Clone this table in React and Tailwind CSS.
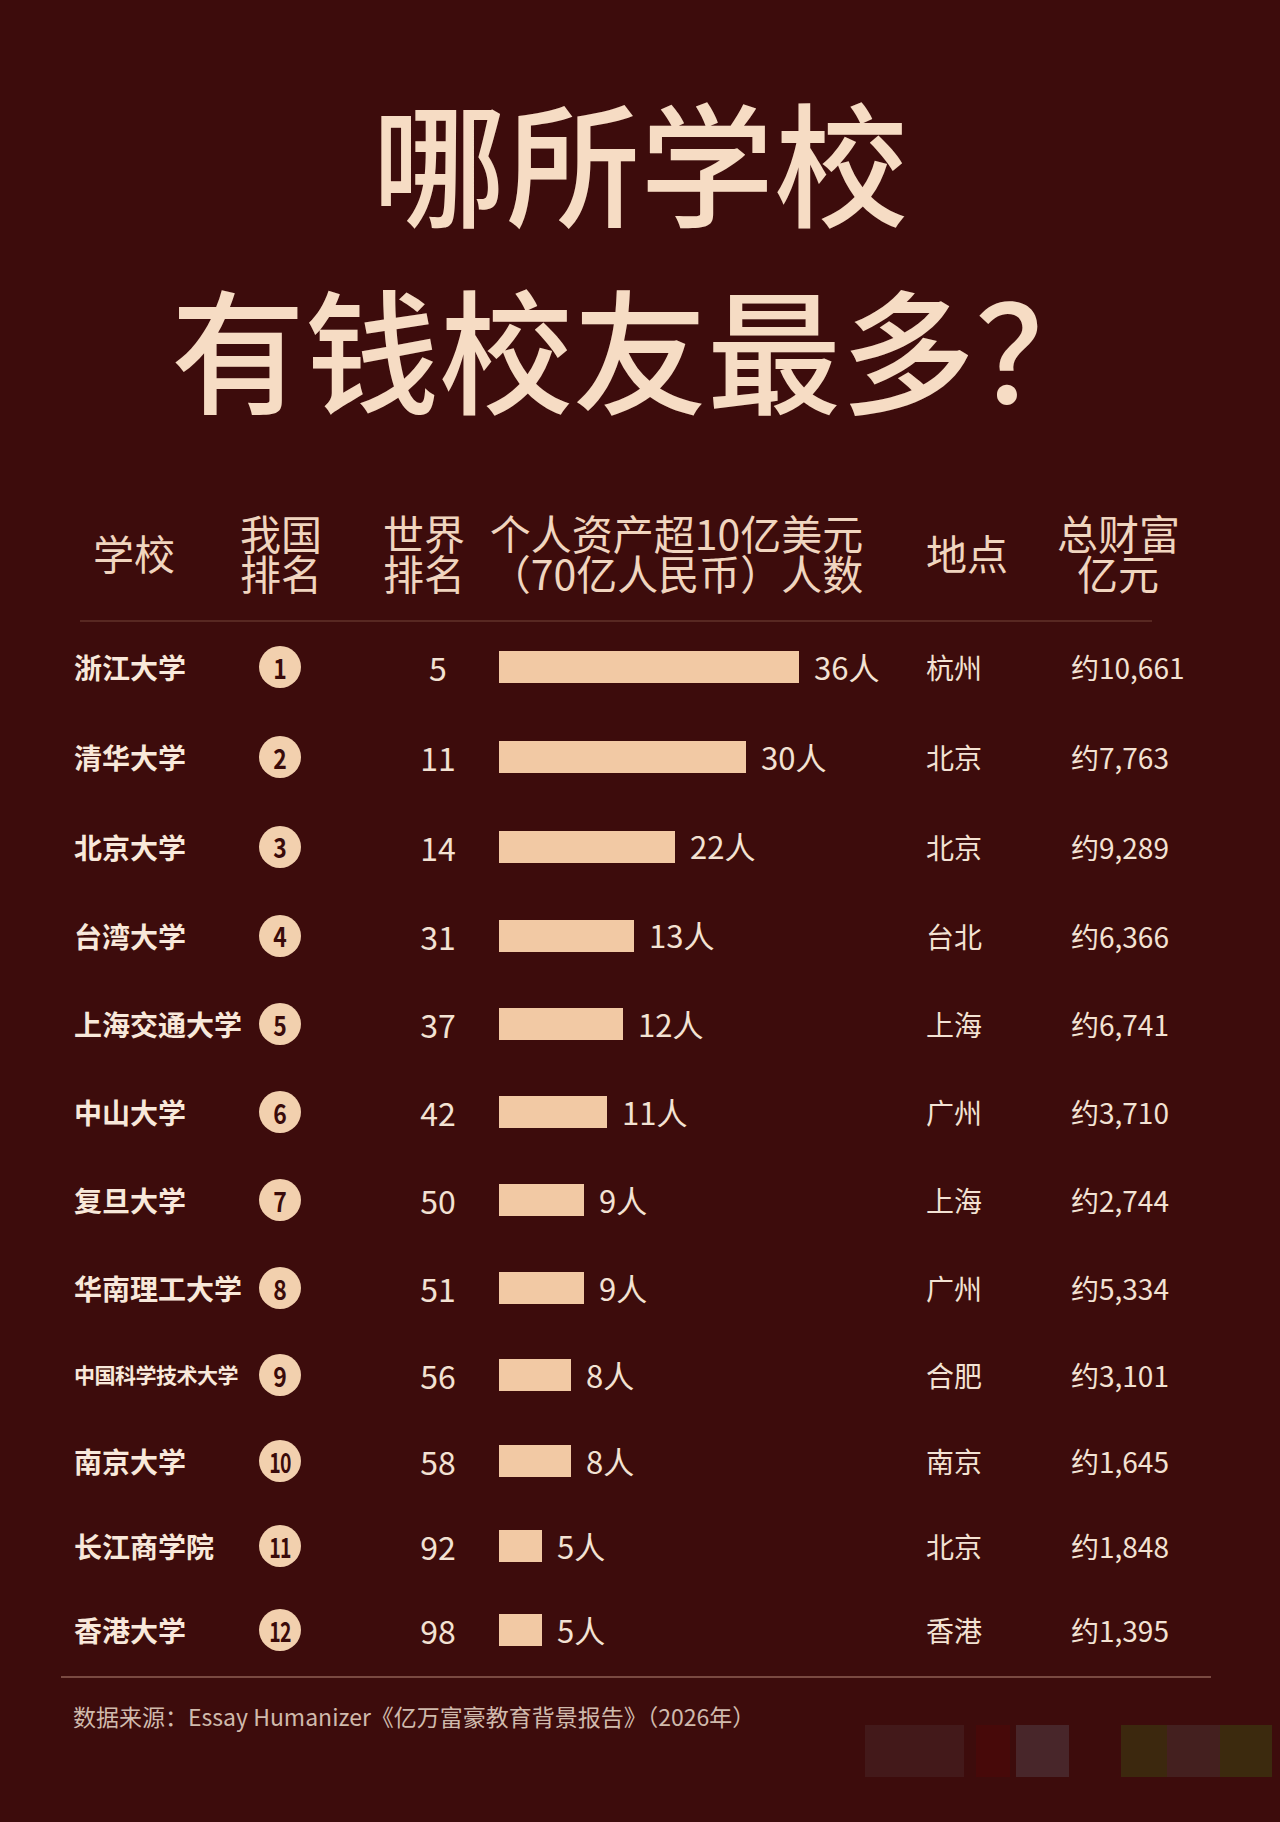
import React from "react";

const rows = [
  { name: "浙江大学", rank: 1, world: 5, count: 36, bar: "w-[300px]", city: "杭州", wealth: "约10,661", h: "h-[90px]" },
  { name: "清华大学", rank: 2, world: 11, count: 30, bar: "w-[247px]", city: "北京", wealth: "约7,763", h: "h-[90px]" },
  { name: "北京大学", rank: 3, world: 14, count: 22, bar: "w-[176px]", city: "北京", wealth: "约9,289", h: "h-[89px]" },
  { name: "台湾大学", rank: 4, world: 31, count: 13, bar: "w-[135px]", city: "台北", wealth: "约6,366", h: "h-[89px]" },
  { name: "上海交通大学", rank: 5, world: 37, count: 12, bar: "w-[124px]", city: "上海", wealth: "约6,741", h: "h-[88px]" },
  { name: "中山大学", rank: 6, world: 42, count: 11, bar: "w-[108px]", city: "广州", wealth: "约3,710", h: "h-[88px]" },
  { name: "复旦大学", rank: 7, world: 50, count: 9, bar: "w-[85px]", city: "上海", wealth: "约2,744", h: "h-[88px]" },
  { name: "华南理工大学", rank: 8, world: 51, count: 9, bar: "w-[85px]", city: "广州", wealth: "约5,334", h: "h-[88px]" },
  { name: "中国科学技术大学", rank: 9, world: 56, count: 8, bar: "w-[72px]", city: "合肥", wealth: "约3,101", h: "h-[86px]", small: true },
  { name: "南京大学", rank: 10, world: 58, count: 8, bar: "w-[72px]", city: "南京", wealth: "约1,645", h: "h-[86px]" },
  { name: "长江商学院", rank: 11, world: 92, count: 5, bar: "w-[43px]", city: "北京", wealth: "约1,848", h: "h-[84px]" },
  { name: "香港大学", rank: 12, world: 98, count: 5, bar: "w-[43px]", city: "香港", wealth: "约1,395", h: "h-[84px]" },
];

const Row = ({ r }) => (
  <div className={`flex items-center pl-[74px] ${r.h}`}>
    <div
      className={`w-[176px] font-bold text-[#f8e8da] whitespace-nowrap ${
        r.small ? "text-[21px] tracking-[-0.5px]" : "text-[28px]"
      }`}
    >
      {r.name}
    </div>
    <div className="w-[60px] flex justify-center">
      <div className="w-[42px] h-[42px] rounded-full bg-[#f2d0ae] flex items-center justify-center text-[27px] font-bold leading-none text-[#3a0b0a]">
        <span className={r.rank > 9 ? "inline-block scale-x-[0.72] tracking-[-1px]" : "inline-block scale-x-[0.85]"}>
          {r.rank}
        </span>
      </div>
    </div>
    <div className="ml-[88px] w-[80px] text-center text-[32px] text-[#f3e2d3]">{r.world}</div>
    <div className="ml-[21px] w-[427px] flex items-center">
      <div className={`h-[32px] bg-[#f2c9a4] ${r.bar}`} />
      <span className="ml-[15px] text-[31px] text-[#f3e2d3]">{r.count}人</span>
    </div>
    <div className="w-[145px] text-[28px] text-[#f3e2d3]">{r.city}</div>
    <div className="text-[28px] text-[#f3e2d3] whitespace-nowrap">{r.wealth}</div>
  </div>
);

const App = () => {
  return (
    <div className="min-h-[1822px] w-[1280px] bg-[#3d0c0c] font-['Noto_Sans_CJK_SC','Noto_Sans',sans-serif]">
      <h1 className="pt-[66px] text-center text-[134px] leading-[187px] font-medium text-[#f6dcc4]">
        <div>哪所学校</div>
        <div>有钱校友最多？</div>
      </h1>

      <div className="mt-[72px] flex items-center pl-[93px] text-[41px] leading-[40px] text-[#f0d5bf] whitespace-nowrap">
        <div className="w-[147px]">学校</div>
        <div className="w-[82px] text-center">
          <div>我国</div>
          <div>排名</div>
        </div>
        <div className="ml-[61px] w-[80px] text-center">
          <div>世界</div>
          <div>排名</div>
        </div>
        <div className="ml-[25px] w-[377px] text-center">
          <div>个人资产超10亿美元</div>
          <div>（70亿人民币）人数</div>
        </div>
        <div className="ml-[61px] w-[80px]">地点</div>
        <div className="ml-[51px] w-[122px] text-center">
          <div>总财富</div>
          <div>亿元</div>
        </div>
      </div>

      <div className="mt-[28px] ml-[80px] w-[1072px] h-[2px] bg-[#582822]" />

      <div>
        {rows.map((r) => (
          <Row key={r.rank} r={r} />
        ))}
      </div>

      <div className="mt-[4px] ml-[61px] w-[1150px] h-[2px] bg-[#7a4a42]" />

      <div className="flex items-start">
        <p className="mt-[23px] ml-[73px] w-[792px] text-[23px] leading-[30px] text-[#d0baac] whitespace-nowrap">
          数据来源：Essay Humanizer《亿万富豪教育背景报告》（2026年）
        </p>
        <div className="mt-[47px] flex h-[52px]">
          <div className="w-[99px] bg-[#43191a]" />
          <div className="ml-[12px] w-[34px] bg-[#470909]" />
          <div className="ml-[6px] w-[53px] bg-[#48262a]" />
          <div className="ml-[52px] w-[46px] bg-[#3c280e]" />
          <div className="w-[53px] bg-[#44201f]" />
          <div className="w-[52px] bg-[#3c2a0e]" />
        </div>
      </div>
    </div>
  );
};

export default App;
